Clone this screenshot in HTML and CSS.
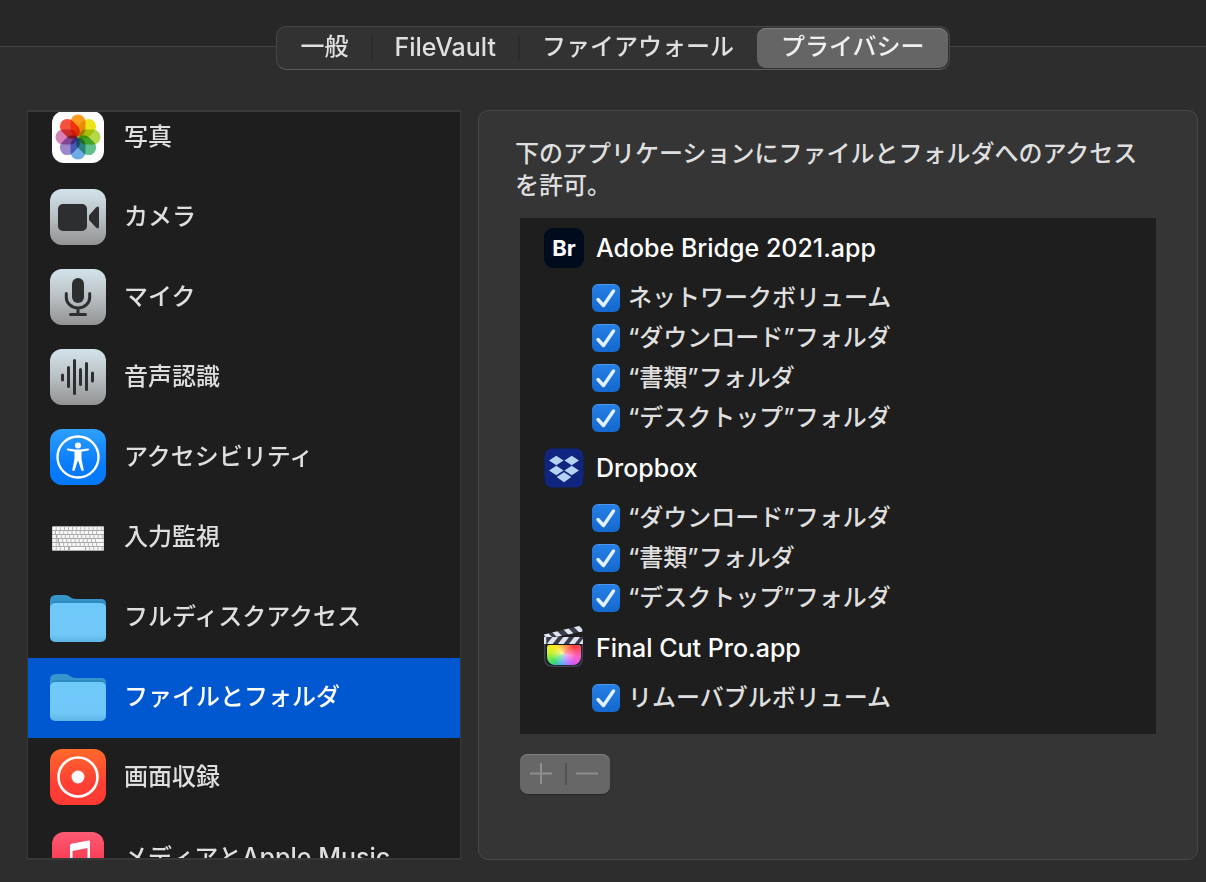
FILE: index.html
```html
<!DOCTYPE html>
<html lang="ja">
  <head>
    <meta charset="utf-8">
    <meta name="viewport" content="width=device-width,initial-scale=1">
    <title>セキュリティとプライバシー</title>
    <link rel="stylesheet" href="styles.css">
  </head>

  <body>
    <header class="top">
      <nav class="tabs">
        <button type="button" class="tab">一般</button>
        <span class="sep"></span>
        <button type="button" class="tab latin">FileVault</button>
        <span class="sep"></span>
        <button type="button" class="tab">ファイアウォール</button>
        <button type="button" class="tab active">プライバシー</button>
      </nav>
    </header>

    <main>
      <nav class="sidebar">
        <ul>
          <li><a href="#photos">
            <svg class="icon" viewBox="0 -1 56 56">
              <rect x="2" y="1" width="52" height="52" rx="12" fill="#fdfdfd"/>
              <g class="petals" transform="translate(28 27)">
                <rect x="-7.500" y="-22.500" width="15" height="22" rx="7.500" fill="#fb9c1e"/>
                <rect x="-7.500" y="-22.500" width="15" height="22" rx="7.500" fill="#ece31b" transform="rotate(45)"/>
                <rect x="-7.500" y="-22.500" width="15" height="22" rx="7.500" fill="#b3d84a" transform="rotate(90)"/>
                <rect x="-7.500" y="-22.500" width="15" height="22" rx="7.500" fill="#5fc08a" transform="rotate(135)"/>
                <rect x="-7.500" y="-22.500" width="15" height="22" rx="7.500" fill="#6fabe4" transform="rotate(180)"/>
                <rect x="-7.500" y="-22.500" width="15" height="22" rx="7.500" fill="#9c86cc" transform="rotate(225)"/>
                <rect x="-7.500" y="-22.500" width="15" height="22" rx="7.500" fill="#d583b4" transform="rotate(270)"/>
                <rect x="-7.500" y="-22.500" width="15" height="22" rx="7.500" fill="#f4513f" transform="rotate(315)"/>
              </g>
            </svg>
            写真</a></li>
          <li><a href="#camera">
            <svg class="icon" viewBox="0 0 56 56">
              <defs>
                <linearGradient id="silver" x2="0" y2="1">
                  <stop offset="0" stop-color="#d3e3eb"/>
                  <stop offset=".5" stop-color="#b9c0c4"/>
                  <stop offset="1" stop-color="#929292"/>
                </linearGradient>
              </defs>
              <rect width="56" height="56" rx="12" fill="url(#silver)"/>
              <rect x="8" y="15" width="29" height="27" rx="5" fill="#2d2e2f"/>
              <path d="M39 26.500L46 18.500q3-2.500 3 1v18q0 3.500-3 1L39 31z" fill="#2d2e2f"/>
            </svg>
            カメラ</a></li>
          <li><a href="#mic">
            <svg class="icon" viewBox="0 0 56 56">
              <rect width="56" height="56" rx="12" fill="url(#silver)"/>
              <rect x="22" y="9" width="12" height="25" rx="6" fill="#2d2e2f"/>
              <path d="M16.300 24.500v4a11.700 10.500 0 0 0 23.400 0v-4M28 39v6M20.500 45.500h15" fill="none" stroke="#2d2e2f" stroke-width="3" stroke-linecap="round"/>
            </svg>
            マイク</a></li>
          <li><a href="#speech">
            <svg class="icon" viewBox="0 0 56 56">
              <rect width="56" height="56" rx="12" fill="url(#silver)"/>
              <path d="M12.500 26v5M18.500 18.500v19M24.500 11.500v33M30.500 20.500v15M36.500 14.500v26M42.500 24v8" stroke="#2d2e2f" stroke-width="3" stroke-linecap="round"/>
            </svg>
            音声認識</a></li>
          <li><a href="#accessibility">
            <svg class="icon" viewBox="0 0 56 56">
              <defs>
                <linearGradient id="blue" x2="0" y2="1">
                  <stop offset="0" stop-color="#2ea0fd"/>
                  <stop offset=".6" stop-color="#0a7dfd"/>
                  <stop offset="1" stop-color="#0578fb"/>
                </linearGradient>
              </defs>
              <rect width="56" height="56" rx="12" fill="url(#blue)"/>
              <circle cx="28" cy="28" r="20.500" fill="none" stroke="#fff" stroke-width="2.400"/>
              <circle cx="28" cy="16.500" r="3" fill="#fff"/>
              <path d="M18 20.500l7 1.200h6l7-1.200" fill="none" stroke="#fff" stroke-width="2.200" stroke-linecap="round"/>
              <path d="M24.500 21h7v9l2.300 11.300q-1.500 1.600-2.500 0L28.300 32h-.6L24.700 41.300q-1 1.600-2.500 0L24.500 30z" fill="#fff"/>
            </svg>
            アクセシビリティ</a></li>
          <li><a href="#input">
            <svg class="icon" viewBox="0 -1 56 56">
              <rect x="2" y="16" width="52" height="25" rx="1" fill="#aaa"/>
              <g stroke="#f7f7f7" stroke-width="3" stroke-dasharray="3.300 .8">
                <path d="M2.500 18.500h51"/>
                <path d="M2.500 22.500h2.500M6 22.500h47.500"/>
                <path d="M2.500 26.500h4M7.500 26.500h46"/>
                <path d="M2.500 30.500h5M9 30.500h44.500"/>
                <path d="M2.500 34.500h6M10 34.500h43.500"/>
                <path d="M2.500 38.500h16M36 38.500h17.500"/>
              </g>
              <path d="M20 38.500h15M49 22.500h4.500M47 30.500h6.500M47 34.500h6.500" stroke="#f7f7f7" stroke-width="3"/>
            </svg>
            入力監視</a></li>
          <li><a href="#disk">
            <svg class="icon" viewBox="0 -1 56 56">
              <defs>
                <linearGradient id="folder" x2="0" y2="1">
                  <stop offset="0" stop-color="#6fc9f9"/>
                  <stop offset=".8" stop-color="#70c8f9"/>
                  <stop offset="1" stop-color="#5cb5e4"/>
                </linearGradient>
              </defs>
              <path d="M0 20V11q0-6 6-6h9q3 0 5 2l2 1.300q1.500.7 4 .7h25q5 0 5 5v8z" fill="#3795cb"/>
              <path d="M1 15q1-3 5-3h44q4 0 5 3" fill="none" stroke="#2380b8"/>
              <rect y="13" width="56" height="39" rx="5" fill="url(#folder)"/>
            </svg>
            フルディスクアクセス</a></li>
          <li><a href="#files" class="selected" aria-current="true">
            <svg class="icon" viewBox="0 0 56 56">
              <path d="M0 20V11q0-6 6-6h9q3 0 5 2l2 1.300q1.500.7 4 .7h25q5 0 5 5v8z" fill="#3795cb"/>
              <path d="M1 15q1-3 5-3h44q4 0 5 3" fill="none" stroke="#2380b8"/>
              <rect y="13" width="56" height="39" rx="5" fill="url(#folder)"/>
            </svg>
            ファイルとフォルダ</a></li>
          <li><a href="#screen">
            <svg class="icon" viewBox="0 0 56 56">
              <defs>
                <linearGradient id="orange" x2="0" y2="1">
                  <stop offset="0" stop-color="#ff6a2a"/>
                  <stop offset=".6" stop-color="#ff4034"/>
                  <stop offset="1" stop-color="#ff3a33"/>
                </linearGradient>
              </defs>
              <rect width="56" height="56" rx="12" fill="url(#orange)"/>
              <circle cx="28" cy="28" r="19.500" fill="none" stroke="#fff" stroke-width="2.600"/>
              <circle cx="28" cy="28" r="6.500" fill="#fff"/>
            </svg>
            画面収録</a></li>
          <li><a href="#music">
            <svg class="icon" viewBox="0 -1 56 56">
              <defs>
                <linearGradient id="pink" x2="0" y2="1">
                  <stop offset="0" stop-color="#fb5b74"/>
                  <stop offset="1" stop-color="#fa233b"/>
                </linearGradient>
              </defs>
              <rect x="2" y="2" width="52" height="52" rx="12" fill="url(#pink)"/>
              <path d="M20 15.500q0-1.300 1.500-1.700L38.500 10.500q1.500-.2 1.500 1.200V36h-2.500V18L22.500 21v19H20z" fill="#fff"/>
              <ellipse cx="18" cy="40" rx="5" ry="4" fill="#fff"/>
              <ellipse cx="35.500" cy="36.500" rx="5" ry="4" fill="#fff"/>
            </svg>
            <span>メディアと<span class="latin">Apple Music</span></span></a></li>
        </ul>
      </nav>

      <section class="panel">
        <p>下のアプリケーションにファイルとフォルダへのアクセスを許可。</p>

        <div class="apps">
          <h2><span class="bridge">Br</span>Adobe Bridge 2021.app</h2>
          <label><input type="checkbox" checked>ネットワークボリューム</label>
          <label><input type="checkbox" checked>“ダウンロード”フォルダ</label>
          <label><input type="checkbox" checked>“書類”フォルダ</label>
          <label><input type="checkbox" checked>“デスクトップ”フォルダ</label>

          <h2>
            <svg class="app-icon" viewBox="0 0 40 40">
              <rect x=".5" y=".5" width="39" height="39" rx="8" fill="#10257f"/>
              <path d="M12.300 7.800l7.300 4.700-7.300 4.700L5 12.500zM27.700 7.800l7.300 4.700-7.300 4.700-7.300-4.700zM12.300 17.800l7.300 4.700-7.300 4.700L5 22.500zM27.700 17.800l7.300 4.700-7.300 4.700-7.300-4.700zM20 24.300l7.300 4.700L20 34.200 12.700 29z" fill="#b7d3f3"/>
            </svg>
            Dropbox
          </h2>
          <label><input type="checkbox" checked>“ダウンロード”フォルダ</label>
          <label><input type="checkbox" checked>“書類”フォルダ</label>
          <label><input type="checkbox" checked>“デスクトップ”フォルダ</label>

          <h2>
            <svg class="app-icon" viewBox="0 0 40 40">
              <defs>
                <clipPath id="top"><path d="M0 6.500L35-2q3 0 3.500 5.500L2 11Q-1 9 0 6.500z"/></clipPath>
                <clipPath id="bar"><path d="M0 9h39v7H0z"/></clipPath>
              </defs>
              <path d="M0 14h39v16q0 9-9 9H9q-9 0-9-9z" fill="#3d4254"/>
              <path d="M1.500 16h36v14q0 7.500-7.500 7.500H9q-7.500 0-7.500-7.500z" fill="#15171e"/>
              <foreignObject x="3" y="17" width="34" height="20"><div class="wheel"></div></foreignObject>
              <g clip-path="url(#top)">
                <path d="M0-2h40v14H0z" fill="#3a3e4c"/>
                <path d="M0 4l8 8M8 1l9 9M19-2l9 9M30-4l9 9" stroke="#dfe4ee" stroke-width="4.500"/>
              </g>
              <g clip-path="url(#bar)">
                <path d="M0 8h40v8H0z" fill="#3a3e4c"/>
                <path d="M0 8v8M5 17l7-9M16 17l7-9M27 17l7-9M37 17l7-9" stroke="#dfe4ee" stroke-width="4.500"/>
              </g>
            </svg>
            Final Cut Pro.app
          </h2>
          <label><input type="checkbox" checked>リムーバブルボリューム</label>
        </div>

        <div class="add-remove">
          <button type="button" aria-label="追加" disabled>
            <svg viewBox="0 0 22 22"><path d="M11 0v21M0 10.500h22" stroke="currentColor" stroke-width="2"/></svg>
          </button>
          <button type="button" aria-label="削除" disabled>
            <svg viewBox="0 0 22 22"><path d="M0 10.500h22" stroke="currentColor" stroke-width="2"/></svg>
          </button>
        </div>
      </section>
    </main>
  </body>
</html>
```
FILE: styles.css
```css
/* reset/general */
* { box-sizing: border-box; }
body {
  display: flex;
  flex-direction: column;
  height: 100vh;
  margin: 0;
  background: #2d2d2d;
  color: #dfdfdf;
  font: 500 24px/32px Inter, "Noto Sans CJK JP", sans-serif;
}
ul { list-style: none; margin: 0; padding: 0; }
p, h2 { margin: 0; }
button { border: 0; background: none; color: inherit; font: inherit; }
.latin { font-size: 25px; }

/* tabs */
.top {
  display: flex;
  justify-content: center;
  padding: 26px 8px 40px 28px;
  background: linear-gradient(#272727 46px, #424242 46px, #424242 47px, #2d2d2d 47px);
}
.tabs {
  display: flex;
  align-items: center;
  height: 44px;
  padding: 1px;
  background: #323232;
  border: 1px solid #464646;
  border-bottom-color: #5c5c5c;
  border-radius: 10px;
}
.tab { height: 40px; padding: 0 23px 2px; border-radius: 9px; }
.tab.active { padding: 0 24px 2px; background: #656565; box-shadow: inset 0 1px #7c7c7c; color: #f0f0f0; }
.sep { width: 2px; height: 24px; margin: 0 -1px; background: #2b2b2b; }

main {
  display: grid;
  grid-template-columns: 434px minmax(0, 1fr);
  grid-template-rows: minmax(0, 1fr);
  gap: 17px;
  flex: 1;
  min-height: 0;
  padding: 0 8px 22px 27px;
}

/* category list, scrolled a little way down */
.sidebar { overflow: hidden; background: #1e1e1e; border: 2px solid #383838; border-width: 2px 1px; }
.sidebar ul { margin-top: -14px; }
.sidebar a {
  display: flex;
  align-items: center;
  gap: 18px;
  height: 80px;
  padding: 0 22px 2px;
  color: inherit;
  text-decoration: none;
  white-space: nowrap;
}
.sidebar a.selected { background: #0058d0; color: #fff; }
.icon { flex: none; width: 56px; height: 56px; }
.petals { isolation: isolate; }
.petals rect { mix-blend-mode: multiply; }

/* right side */
.panel {
  padding: 27px 41px 25px 36px;
  background: #353535;
  border: 1px solid #484848;
  border-radius: 10px;
}
.apps { margin: 16px 0 20px 5px; padding: 0 24px 16px; background: #1e1e1e; }
.apps h2 {
  display: flex;
  align-items: center;
  gap: 12px;
  height: 60px;
  color: #fff;
  font-size: 25px;
  font-weight: 500;
}
.app-icon, .bridge { flex: none; width: 40px; height: 40px; }
.app-icon { overflow: visible; }
.bridge {
  background: #000b1d;
  border-radius: 9px;
  font-size: 22px;
  font-weight: 700;
  line-height: 40px;
  text-align: center;
}
.wheel {
  height: 20px;
  border-radius: 2px 2px 8px 8px;
  background:
    radial-gradient(circle at 50% 45%, #fff9, #fff0 60%),
    conic-gradient(from 0deg at 50% 45%, #ff8c1a, #ff3b30 50deg, #ff5fc0 100deg, #c65cff 145deg, #4a9dff 190deg, #3fe06a 235deg, #c8f02a 275deg, #ffe81a 310deg, #ff8c1a);
}
.apps label { display: flex; align-items: center; gap: 8px; height: 40px; padding-left: 48px; }
.apps input {
  appearance: none;
  flex: none;
  width: 28px;
  height: 28px;
  margin: 0;
  border-radius: 6px;
}
.apps input:checked {
  background:
    url("data:image/svg+xml,%3Csvg xmlns='http://www.w3.org/2000/svg' viewBox='0 0 28 28'%3E%3Cpath d='M6 15.500l5.500 6L21.500 7' fill='none' stroke='%23e4f1ff' stroke-width='3.400' stroke-linecap='round' stroke-linejoin='round'/%3E%3C/svg%3E"),
    linear-gradient(#2680e6, #1468cf);
  box-shadow: inset 0 1px #4a98ee;
}

/* + / - */
.add-remove {
  display: inline-flex;
  align-items: center;
  height: 40px;
  margin-left: 5px;
  background: #676767;
  border-radius: 8px;
  box-shadow: inset 0 1px #7e7e7e, 0 1px 1px #2a2a2a;
  color: #8f8f8f;
}
.add-remove button { display: flex; justify-content: center; width: 45px; padding: 0 3px 0 0; }
.add-remove button + button { border-left: 2px solid #525252; }
.add-remove svg { width: 22px; height: 22px; }
```
